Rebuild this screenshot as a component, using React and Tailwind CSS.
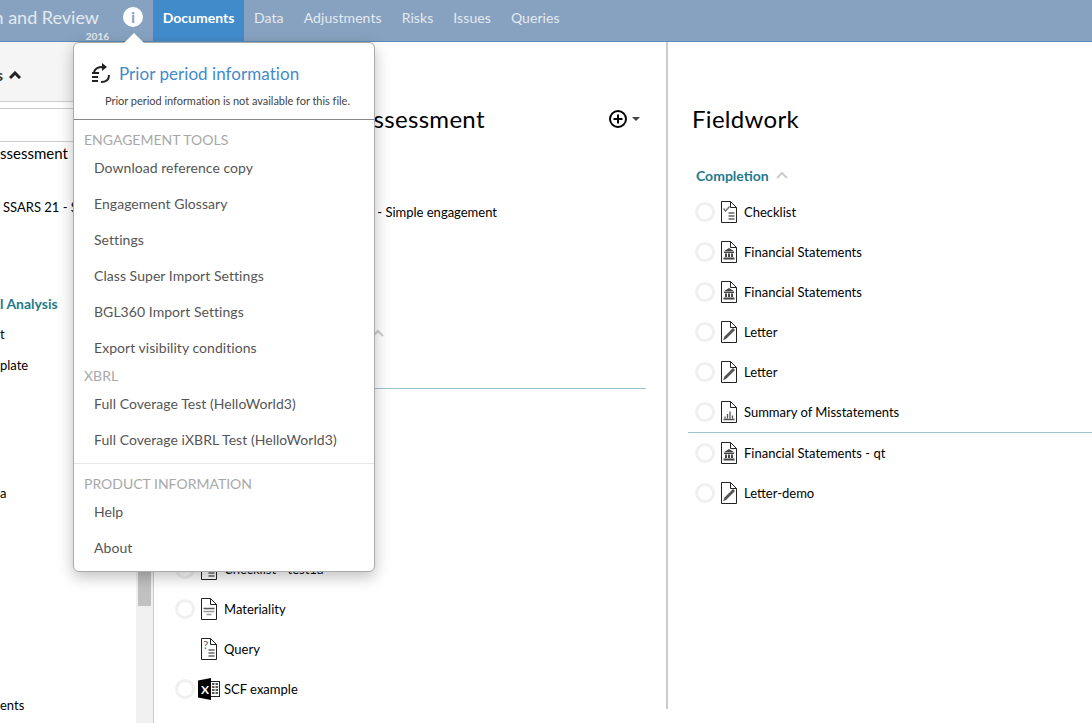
import React from 'react';

const NAV = ['Data', 'Adjustments', 'Risks', 'Issues', 'Queries'];

const MENU_ONE = [
  'Download reference copy',
  'Engagement Glossary',
  'Settings',
  'Class Super Import Settings',
  'BGL360 Import Settings',
  'Export visibility conditions',
];
const MENU_XBRL = ['Full Coverage Test (HelloWorld3)', 'Full Coverage iXBRL Test (HelloWorld3)'];

const COMPLETION = [
  { kind: 'check', label: 'Checklist' },
  { kind: 'bank', label: 'Financial Statements' },
  { kind: 'bank', label: 'Financial Statements' },
  { kind: 'pen', label: 'Letter' },
  { kind: 'pen', label: 'Letter' },
  { kind: 'chart', label: 'Summary of Misstatements' },
];

function DocIcon({ kind }) {
  return (
    <svg width="16" height="22" viewBox="0 0 16 22" className="shrink-0 block">
      <path d="M0.5 0.5H9.5L15.5 6.5V21.5H0.5Z" fill="#fff" stroke="#222" />
      <path d="M9.5 0.5V6.5H15.5" fill="none" stroke="#222" />
      {kind === 'check' && (
        <g>
          <path d="M2.5 7.5L4.5 10L8.5 5.5" fill="none" stroke="#777" strokeWidth="1.5" />
          <path d="M7.5 12H13.5M7.5 15H13.5M7.5 18H13.5" stroke="#666" strokeWidth="1.5" />
        </g>
      )}
      {kind === 'bank' && (
        <g fill="#444">
          <path d="M8 7L13.5 10.5H2.5Z" />
          <rect x="3" y="11" width="10" height="1" />
          <rect x="4" y="12.5" width="2" height="3.5" />
          <rect x="7" y="12.5" width="2" height="3.5" />
          <rect x="10" y="12.5" width="2" height="3.5" />
          <rect x="2.5" y="16.5" width="11" height="2" />
        </g>
      )}
      {kind === 'pen' && (
        <g>
          <path d="M2 19.5L3.5 15.5L12 7L14 9L5.5 17.5Z" fill="#555" />
        </g>
      )}
      {kind === 'chart' && (
        <path d="M2.5 18.5H13.5M4 17.5V15.5M6.5 17.5V13M9 17.5V10.5M11.5 17.5V14.5" stroke="#555" strokeWidth="1.3" fill="none" />
      )}
      {kind === 'lines' && (
        <g>
          <path d="M2.5 10.5H13.5" stroke="#555" strokeWidth="1.5" />
          <path d="M2.5 13.5H13.5" stroke="#999" strokeWidth="1.5" />
          <path d="M5.5 16.5H10.5" stroke="#999" strokeWidth="1.5" />
        </g>
      )}
      {kind === 'query' && (
        <g>
          <text x="2" y="11" fontSize="12" fontFamily="Lato, sans-serif" fill="#666">?</text>
          <path d="M7.5 12H13.5M7.5 15H13.5M7.5 18H13.5" stroke="#666" strokeWidth="1.5" />
        </g>
      )}
    </svg>
  );
}

function ExcelIcon() {
  return (
    <svg width="22" height="22" viewBox="0 0 22 22" className="shrink-0 block">
      <rect x="12.5" y="3.5" width="9" height="15" fill="#fff" stroke="#222" />
      <path d="M14 6H20M14 9H20M14 12H20M14 15H20" stroke="#222" strokeWidth="1.6" />
      <path d="M17 4V18" stroke="#fff" />
      <path d="M0 2.5L13 0V22L0 19.5Z" fill="#000" />
      <text x="3" y="15.5" fontSize="12" fontWeight="700" fontFamily="Lato, sans-serif" fill="#fff">X</text>
    </svg>
  );
}

function Radio() {
  return <span className="block w-5 h-5 rounded-full border-[3px] border-[#f0f0f0] shrink-0" />;
}

function DocRow({ kind, label, radio = true }) {
  return (
    <div className="h-10 flex items-center text-[13px] text-black">
      {radio ? <Radio /> : <span className="w-5 shrink-0" />}
      {kind === 'excel' ? (
        <span className="ml-[3px] mr-[4px]"><ExcelIcon /></span>
      ) : (
        <span className="ml-[6px] mr-[7px]"><DocIcon kind={kind} /></span>
      )}
      <span className="pt-[2px] whitespace-nowrap">{label}</span>
    </div>
  );
}

function MenuItem({ children }) {
  return <div className="h-9 flex items-center pl-[20px] pb-[2px] text-[14px] tracking-[0.05px] text-[#555]">{children}</div>;
}

function MenuHeading({ children, className = '' }) {
  return <div className={`pl-[10px] text-[14px] uppercase text-[#a8a8a8] ${className}`}>{children}</div>;
}

function Chevron({ color = '#ccc', width = 2, className = '' }) {
  return (
    <svg width="12" height="8" viewBox="0 0 12 8" className={className}>
      <path d="M1 7L6 2L11 7" fill="none" stroke={color} strokeWidth={width} />
    </svg>
  );
}

function PriorPeriodPopover() {
  return (
    <div className="absolute left-[73px] top-[42px] w-[302px] h-[530px] bg-white border border-[#aaa] rounded-[6px] shadow-[0_5px_15px_rgba(0,0,0,0.25)] z-10">
      <span className="absolute -top-[10px] left-[50px] w-0 h-0 border-x-[10px] border-x-transparent border-b-[10px] border-b-white" />
      <div className="h-[77px] border-b border-[#888]">
        <div className="flex items-center pl-[17px] pt-[17px]">
          <svg width="20" height="22" viewBox="0 0 20 22" className="shrink-0">
            <path d="M3 9C4 5 7 4 12 4" fill="none" stroke="#222" strokeWidth="2" />
            <path d="M11 0L16 4L11 8Z" fill="#222" />
            <path d="M1 10H8M1 14H7M1 18H7" stroke="#222" strokeWidth="2" />
            <path d="M18 12C18 17 15 19 10 19" fill="none" stroke="#222" strokeWidth="2" />
          </svg>
          <span className="ml-[8px] text-[17px] tracking-[0.05px] text-[#428bca] leading-[28px]">Prior period information</span>
        </div>
        <div className="mt-[5px] pl-[31px] text-[11px] tracking-[-0.03px] text-[#444] leading-[16px]">Prior period information is not available for this file.</div>
      </div>
      <MenuHeading className="mt-[12px] leading-[16px]">Engagement Tools</MenuHeading>
      <div className="mt-[2px]">
        {MENU_ONE.map((m) => <MenuItem key={m}>{m}</MenuItem>)}
      </div>
      <MenuHeading className="leading-[20px]">XBRL</MenuHeading>
      <div>
        {MENU_XBRL.map((m) => <MenuItem key={m}>{m}</MenuItem>)}
      </div>
      <div className="mt-[5px] border-t border-[#e8e8e8]" />
      <MenuHeading className="mt-[12px] leading-[16px]">Product Information</MenuHeading>
      <div className="mt-[2px]">
        <MenuItem>Help</MenuItem>
        <MenuItem>About</MenuItem>
      </div>
    </div>
  );
}

function Sidebar() {
  return (
    <aside className="w-[154px] shrink-0 border-r border-[#ccc] overflow-hidden flex">
      <div className="w-[136px] shrink-0 overflow-hidden text-[13px] leading-[20px] text-black">
        <div className="h-[60px] bg-[#f5f5f5] border-b border-[#ccc] flex items-center pt-[6px] text-[16px] font-bold text-[#333]">
          <span className="-ml-[4px]">s</span>
          <Chevron color="#222" width={3} className="ml-[6px]" />
        </div>
        <div className="h-[6px]" />
        <div className="h-[34px] border-y border-[#ccc]" />
        <div className="mt-[1px] text-[15px] whitespace-nowrap">ssessment</div>
        <div className="mt-[34px] pl-[3px] whitespace-nowrap">SSARS 21 - S</div>
        <div className="mt-[77px] text-[14px] font-bold text-[#1f7a8c] whitespace-nowrap">l Analysis</div>
        <div className="mt-[10px]">t</div>
        <div className="mt-[11px]">plate</div>
        <div className="mt-[108px]">a</div>
        <div className="mt-[192px]">ents</div>
      </div>
      <div className="w-[17px] shrink-0 bg-[#f0f0f0]">
        <div className="ml-[2px] w-[13px] h-[564px] bg-[#c1c1c1]" />
      </div>
    </aside>
  );
}

export default function App() {
  return (
    <div className="relative w-[1092px] h-[723px] overflow-hidden bg-white font-['Lato',sans-serif] flex flex-col">
      <header className="h-[42px] shrink-0 bg-[#87a2c0] border-b border-[#5b8cbb] flex">
        <div className="w-[153px] relative shrink-0">
          <span className="absolute right-[54px] top-[4px] text-[18px] leading-[26px] text-[#e4e9ef] whitespace-nowrap">n and Review</span>
          <span className="absolute right-[44px] top-[29px] text-[10px] font-bold text-[#e4e9ef]">2016</span>
          <span className="absolute left-[123px] top-[7px] w-5 h-5 rounded-full bg-white flex items-center justify-center text-[16px] font-bold text-[#87a2c0]">i</span>
        </div>
        <div className="h-[41px] w-[91px] pb-[7px] bg-[#428bca] text-white font-bold text-[14px] flex items-center justify-center">Documents</div>
        {NAV.map((n) => (
          <div key={n} className="h-[41px] px-[10px] pb-[7px] flex items-center text-[14px] tracking-[0.08px] text-[#e4e9ef]">{n}</div>
        ))}
      </header>
      <div className="flex-1 flex min-h-0">
        <Sidebar />
        <main className="w-[512px] shrink-0 pl-[21px] pr-[20px] pt-[62px] overflow-hidden">
          <div className="flex items-center h-[30px] pr-[6px]">
            <h2 className="text-[24px] tracking-[0.3px] text-black whitespace-nowrap pl-[132px]">Risk Assessment</h2>
            <svg width="18" height="18" viewBox="0 0 18 18" className="ml-auto">
              <circle cx="9" cy="9" r="8" fill="none" stroke="#000" strokeWidth="2" />
              <path d="M9 4.5V13.5M4.5 9H13.5" stroke="#000" strokeWidth="2" />
            </svg>
            <span className="ml-[5px] w-0 h-0 border-x-[4px] border-x-transparent border-t-[4px] border-t-[#444]" />
          </div>
          <div className="mt-[59px] h-10 w-[322px] flex items-center justify-end text-[13px] text-black whitespace-nowrap">SSARS 21 - Simple engagement</div>
          <div className="mt-[96px] w-[209px] flex justify-end">
            <Chevron />
          </div>
          <div className="mt-[51px] border-t border-[#9cc3cf]" />
          <div className="mt-[160px]">
            <DocRow kind="check" label="Checklist - test1a" />
            <DocRow kind="lines" label="Materiality" />
            <DocRow kind="query" label="Query" radio={false} />
            <DocRow kind="excel" label="SCF example" />
          </div>
        </main>
        <section className="flex-1 min-w-0 pt-[62px] mb-[14px] border-l-2 border-[#ccc] pl-[24px]">
          <h2 className="text-[24px] tracking-[0.3px] leading-[30px] text-black">Fieldwork</h2>
          <div className="mt-[31px] ml-[4px] flex items-center h-5 text-[14px] font-bold text-[#1f7a8c]">
            Completion
            <Chevron className="ml-[7px]" />
          </div>
          <div className="mt-[7px] ml-[3px]">
            {COMPLETION.map((d, i) => <DocRow key={i} kind={d.kind} label={d.label} />)}
          </div>
          <div className="-ml-[4px] border-t border-[#9cc3cf]" />
          <div className="ml-[3px]">
            <DocRow kind="bank" label="Financial Statements - qt" />
            <DocRow kind="pen" label="Letter-demo" />
          </div>
        </section>
      </div>
      <PriorPeriodPopover />
    </div>
  );
}
